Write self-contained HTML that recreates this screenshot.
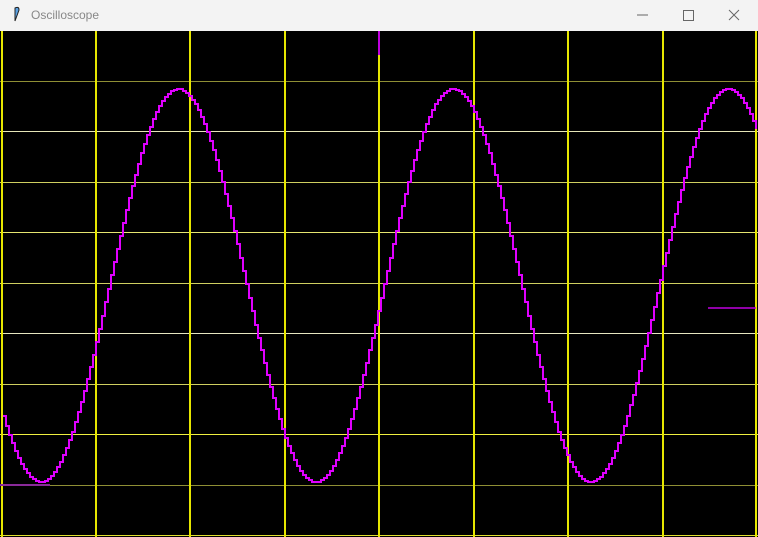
<!DOCTYPE html>
<html><head><style>
html,body{margin:0;padding:0;width:758px;height:537px;overflow:hidden;background:#f3f3f3;font-family:"Liberation Sans",sans-serif}
#tb{position:absolute;left:0;top:0;width:758px;height:31px;background:#f3f3f3}
#title{position:absolute;left:31px;top:8px;font-size:12px;color:#888}
svg{position:absolute;left:0;top:0}
</style></head><body>
<div id="tb"><div id="title">Oscilloscope</div></div>
<svg width="758" height="537" id="s">
<path d="M15 8 q4 -2 4 2 l-4 11 z" fill="#5aa0e0" stroke="#222" stroke-width="1"/>
<line x1="637" y1="15" x2="648" y2="15" stroke="#666"/>
<rect x="683.5" y="10.5" width="10" height="10" fill="none" stroke="#666"/>
<path d="M729 10 l10 10 M739 10 l-10 10" stroke="#666"/>
<rect x="0" y="31" width="758" height="506" fill="#000"/>
<g id="g"></g>
</svg>
<script>
var g=document.getElementById('g'),h='';
var hl=[[81,'#8f8f35'],[131,'#e6e6b8'],[182,'#d0d060'],[232,'#e6e670'],[283,'#d0d060'],[333,'#e6e6c0'],[384,'#d0d060'],[434,'#f0f040'],[485,'#8f8f35'],[535,'#e0e030']];
hl.forEach(function(l){h+='<line x1="0" x2="758" y1="'+(l[0]+.5)+'" y2="'+(l[0]+.5)+'" stroke="'+l[1]+'" stroke-width="1"/>';});
[2,96,190,285,379,474,568,663,756].forEach(function(x){h+='<line y1="31" y2="537" x1="'+x+'" x2="'+x+'" stroke="#e6e600" stroke-width="2"/>';});
h+='<line x1="0" x2="50" y1="485" y2="485" stroke="#8a2a9a" stroke-width="2"/>';
h+='<line x1="708" x2="756" y1="308" y2="308" stroke="#c000e0" stroke-width="1.5"/>';
h+='<line x1="379" x2="379" y1="31" y2="55" stroke="#c000e0" stroke-width="2"/>';
var d='',py=null;
for(var x=3;x<=757;x+=3){var y=Math.round(285.5+196.5*Math.cos(2*Math.PI*(x-40)/275));
if(py===null)d='M'+x+' '+y;else d+=' L'+x+' '+py+' L'+x+' '+y;py=y;}
h+='<path d="'+d+'" fill="none" stroke="#e000ff" stroke-width="2"/>';
g.innerHTML=h;
</script>
</body></html>
